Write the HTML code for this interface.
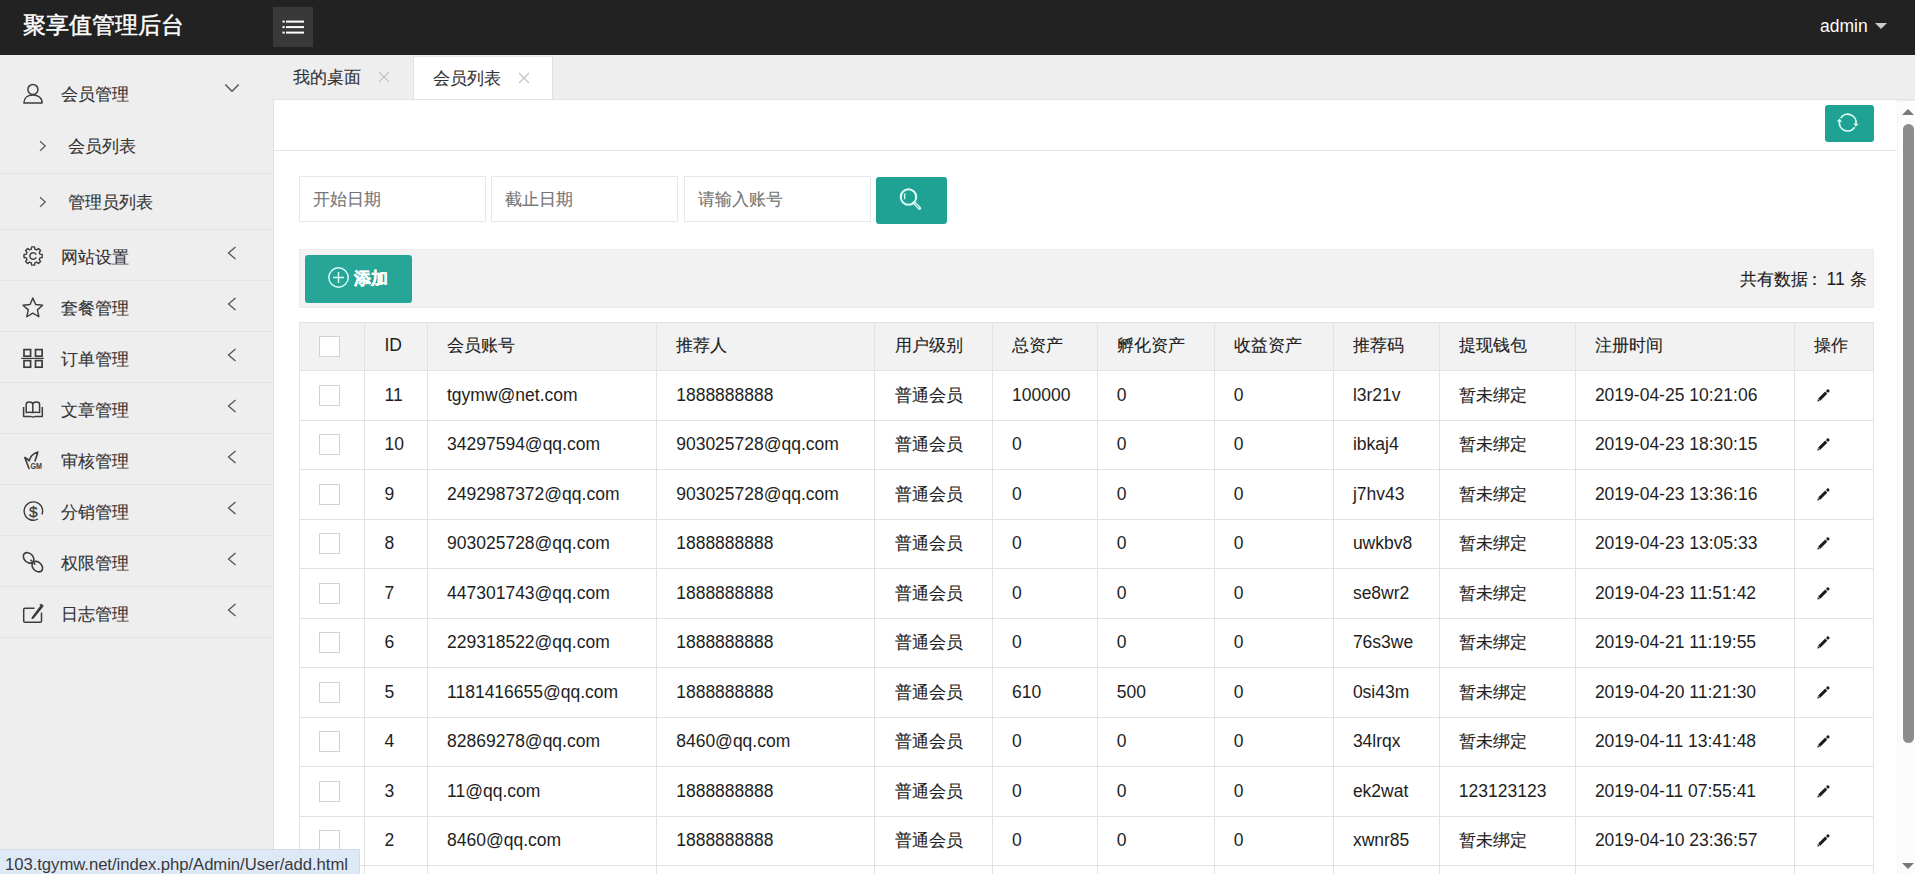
<!DOCTYPE html>
<html><head><meta charset="utf-8">
<style>
*{margin:0;padding:0;box-sizing:border-box}
html,body{width:1915px;height:874px;overflow:hidden;background:#fff;font-family:"Liberation Sans",sans-serif;color:#333;font-size:17.5px;position:relative}
#hdr{position:absolute;left:0;top:0;width:1915px;height:55px;background:#222}
#logo{position:absolute;left:23px;top:9.5px;font-size:23.2px;line-height:30px;color:#fff;white-space:nowrap}
#logo .z{-webkit-text-stroke:0.45px #fff}
#menubtn{position:absolute;left:273px;top:7px;width:40px;height:40px;background:#393939}
#menubtn svg{position:absolute;left:0;top:0}
#admin{position:absolute;left:1820px;top:14px;font-size:17.5px;line-height:24px;color:#fff}
#admin-tri{position:absolute;left:1875px;top:23px;width:0;height:0;border-left:6.5px solid transparent;border-right:6.5px solid transparent;border-top:6.5px solid #ccc}
#side{position:absolute;left:0;top:0;width:273px;height:874px}
#side:before{content:"";position:absolute;left:0;top:55px;width:273px;height:819px;background:#eee}
#side .ico{position:absolute;left:15px}
#side .t{position:absolute;line-height:25px;font-size:17.5px;color:#333;white-space:nowrap}
#side .arr{position:absolute}
#side .line{position:absolute;left:0;width:273px;height:1px;background:#e3e3e3}
#tabs{position:absolute;left:273px;top:55px;width:1642px;height:46px;background:#eee}
#tabs:after{content:"";position:absolute;left:0;top:44px;width:1642px;height:1px;background:#e2e2e2;z-index:3}
#tab1{position:absolute;left:0;top:0;width:140px;height:45px}
#tab2{position:absolute;left:140px;top:1px;width:140px;height:44px;background:#fff;border-left:1px solid #e2e2e2;border-right:1px solid #e2e2e2;border-top:1px solid #e8e8e8;z-index:2}
#tab2 .tt{top:8.5px}
#tab2 .x{top:15px}
.tt{position:absolute;top:9.5px;line-height:25px;font-size:17.5px;color:#333;white-space:nowrap}
.x{position:absolute;top:16px}
#content{position:absolute;left:273px;top:100px;width:1624px;height:774px;background:#fff;border-left:1px solid #e2e2e2}
#nav{position:absolute;left:0;top:50px;width:1623px;height:1px;background:#e5e5e5}
#refresh{position:absolute;left:1825px;top:105px;width:49px;height:37px;background:#1fa193;border-radius:3px}
.inp{position:absolute;top:176px;height:46px;border:1px solid #e8e8e8;background:#fff;font-size:17.5px;color:#757575;line-height:44px;padding-left:13px;white-space:nowrap}
#sbtn{position:absolute;left:876px;top:177px;width:71px;height:47px;background:#1fa193;border-radius:3px}
#xblock{position:absolute;left:299px;top:249px;width:1575px;height:59px;background:#f2f2f2;border:1px solid #ebebeb}
#addbtn{position:absolute;left:305px;top:255px;width:107px;height:48px;background:#27a596;border-radius:3px;color:#fff}
#addt{position:absolute;left:49px;top:11px;line-height:25px;font-size:17.5px;color:#fff;font-weight:bold}
#total{position:absolute;right:48px;top:267px;line-height:24px;font-size:17.5px;color:#333;white-space:nowrap}
#tbl{position:absolute;left:0;top:0}
.thbg{position:absolute;background:#f2f2f2}
.hl{position:absolute;height:1px;background:#e2e2e2}
.vl{position:absolute;width:1px;background:#e2e2e2}
.c{position:absolute;line-height:25px;font-size:17.5px;color:#1e1e1e;white-space:nowrap}
.cb{position:absolute;width:21px;height:21px;border:1px solid #d2d2d2;background:#fff}
.pen{position:absolute}
#sb{position:absolute;left:1897px;top:101px;width:18px;height:773px;background:#fcfcfc;border-left:1px solid #f5f5f5}
#thumb{position:absolute;left:1903px;top:124px;width:11px;height:619px;background:#8c8c8c;border-radius:5.5px}
#sbup{position:absolute;left:1902px;top:109px;width:0;height:0;border-left:6.5px solid transparent;border-right:6.5px solid transparent;border-bottom:6.5px solid #777}
#sbdn{position:absolute;left:1902px;top:863px;width:0;height:0;border-left:6.5px solid transparent;border-right:6.5px solid transparent;border-top:6.5px solid #777}
#status{position:absolute;left:0;top:849px;width:360px;height:25px;background:#dee9f8;border-top:1px solid #d0dcee;border-right:1px solid #d0dcee;font-size:16.7px;line-height:29px;padding-left:5px;color:#3a3a3a;white-space:nowrap;letter-spacing:-0.05px}

.z{font-size:0.972em;-webkit-text-stroke:0.12px currentColor}
#addt .z{-webkit-text-stroke:0.4px #fff}

</style></head><body>
<div id="hdr">
<div id="logo"><span class="z">聚享值管理后台</span></div>
<div id="menubtn"><svg width="40" height="40" viewBox="0 0 40 40"><g fill="#fff"><rect x="9.5" y="13.6" width="2.2" height="2"/><rect x="13" y="13.6" width="18" height="2"/><rect x="9.5" y="19.1" width="2.2" height="2"/><rect x="13" y="19.1" width="18" height="2"/><rect x="9.5" y="24.6" width="2.2" height="2"/><rect x="13" y="24.6" width="18" height="2"/></g></svg></div>
<div id="admin">admin</div>
<div id="admin-tri"></div>
</div>
<div id="side">
<svg class="ico" style="top:75px" width="40" height="40" viewBox="0 0 40 40"><circle cx="17.9" cy="14.4" r="5" fill="none" stroke="#3c3c3c" stroke-width="1.5"/><path d="M8.9,28 C8.9,22.8 12.8,19.9 17.9,19.9 C23,19.9 27.1,22.8 27.1,28 Z" fill="none" stroke="#3c3c3c" stroke-width="1.5" stroke-linejoin="round"/></svg>
<div class="t" style="left:61px;top:82px"><span class="z">会员管理</span></div>
<svg class="arr" style="left:224px;top:83px" width="16" height="11" viewBox="0 0 16 11"><path d="M1.3,1.5 L8,8.3 L14.7,1.5" fill="none" stroke="#555" stroke-width="1.4"/></svg>
<div class="t" style="left:68px;top:134.2px"><span class="z">会员列表</span></div>
<svg class="arr" style="left:38px;top:140.2px" width="10" height="12" viewBox="0 0 10 12"><path d="M2,1.2 L7.3,6 L2,10.8" fill="none" stroke="#555" stroke-width="1.2"/></svg>
<div class="line" style="top:173px"></div>
<div class="t" style="left:68px;top:189.8px"><span class="z">管理员列表</span></div>
<svg class="arr" style="left:38px;top:195.8px" width="10" height="12" viewBox="0 0 10 12"><path d="M2,1.2 L7.3,6 L2,10.8" fill="none" stroke="#555" stroke-width="1.2"/></svg>
<div class="line" style="top:229px"></div>
<svg class="ico" style="top:237px" width="40" height="40" viewBox="0 0 40 40"><path d="M16.66,9.91 L19.54,9.91 L19.92,12.14 L21.67,12.86 L23.51,11.56 L25.54,13.59 L24.24,15.43 L24.96,17.18 L27.19,17.56 L27.19,20.44 L24.96,20.82 L24.24,22.57 L25.54,24.41 L23.51,26.44 L21.67,25.14 L19.92,25.86 L19.54,28.09 L16.66,28.09 L16.28,25.86 L14.53,25.14 L12.69,26.44 L10.66,24.41 L11.96,22.57 L11.24,20.82 L9.01,20.44 L9.01,17.56 L11.24,17.18 L11.96,15.43 L10.66,13.59 L12.69,11.56 L14.53,12.86 L16.28,12.14Z" fill="none" stroke="#3c3c3c" stroke-width="1.4" stroke-linejoin="round"/><path d="M21.2,20.2 A3.3,3.3 0 1 1 21.2,17.8" fill="none" stroke="#3c3c3c" stroke-width="1.4"/></svg>
<div class="t" style="left:61px;top:244.5px"><span class="z">网站设置</span></div>
<svg class="arr" style="left:226px;top:246px" width="12" height="15" viewBox="0 0 12 15"><path d="M9.5,1 L2.5,7 L9.5,13" fill="none" stroke="#555" stroke-width="1.3"/></svg>
<div class="line" style="top:280px"></div>
<svg class="ico" style="top:288px" width="40" height="40" viewBox="0 0 40 40"><path d="M17.85,10.10 L20.67,16.52 L27.65,17.22 L22.42,21.88 L23.90,28.73 L17.85,25.20 L11.80,28.73 L13.28,21.88 L8.05,17.22 L15.03,16.52Z" fill="none" stroke="#3c3c3c" stroke-width="1.4" stroke-linejoin="round"/></svg>
<div class="t" style="left:61px;top:295.5px"><span class="z">套餐管理</span></div>
<svg class="arr" style="left:226px;top:297px" width="12" height="15" viewBox="0 0 12 15"><path d="M9.5,1 L2.5,7 L9.5,13" fill="none" stroke="#555" stroke-width="1.3"/></svg>
<div class="line" style="top:331px"></div>
<svg class="ico" style="top:339px" width="40" height="40" viewBox="0 0 40 40"><rect x="9" y="10.6" width="6.6" height="6.6" fill="none" stroke="#3c3c3c" stroke-width="1.7"/><rect x="20.5" y="10.6" width="6.6" height="6.6" fill="none" stroke="#3c3c3c" stroke-width="1.7"/><rect x="9" y="21.6" width="6.6" height="6.6" fill="none" stroke="#3c3c3c" stroke-width="1.7"/><rect x="20.5" y="21.6" width="6.6" height="6.6" fill="none" stroke="#3c3c3c" stroke-width="1.7"/><path d="M6.2,19.4 H28.8" stroke="#3c3c3c" stroke-width="1.2"/></svg>
<div class="t" style="left:61px;top:346.5px"><span class="z">订单管理</span></div>
<svg class="arr" style="left:226px;top:348px" width="12" height="15" viewBox="0 0 12 15"><path d="M9.5,1 L2.5,7 L9.5,13" fill="none" stroke="#555" stroke-width="1.3"/></svg>
<div class="line" style="top:382px"></div>
<svg class="ico" style="top:390px" width="40" height="40" viewBox="0 0 40 40"><path d="M8.6,17 V26.4 H15.5 L17.8,27.1 L20.1,26.4 H27.3 V17" fill="none" stroke="#3c3c3c" stroke-width="1.5" stroke-linejoin="round"/><path d="M11.2,22.6 V14.5 Q11.2,12 14,12 Q17.8,12 17.8,14.5 V22.6 Q14,21.8 11.2,22.6 Z M17.8,14.5 Q17.8,12 21.6,12 Q24.6,12 24.6,14.5 V22.6 Q21.6,21.8 17.8,22.6" fill="none" stroke="#3c3c3c" stroke-width="1.5" stroke-linejoin="round"/></svg>
<div class="t" style="left:61px;top:397.5px"><span class="z">文章管理</span></div>
<svg class="arr" style="left:226px;top:399px" width="12" height="15" viewBox="0 0 12 15"><path d="M9.5,1 L2.5,7 L9.5,13" fill="none" stroke="#555" stroke-width="1.3"/></svg>
<div class="line" style="top:433px"></div>
<svg class="ico" style="top:441px" width="40" height="40" viewBox="0 0 40 40"><path d="M9.8,16.5 L14,27.5 M9.8,16.5 Q13,18 14,20 Q16,13 22.8,11 Q21.5,16 20,20" fill="none" stroke="#3c3c3c" stroke-width="1.6" stroke-linejoin="round" stroke-linecap="round"/><text x="15.5" y="27.8" font-family="Liberation Sans" font-weight="bold" font-size="9" fill="#3c3c3c" textLength="11.5" lengthAdjust="spacingAndGlyphs">GM</text></svg>
<div class="t" style="left:61px;top:448.5px"><span class="z">审核管理</span></div>
<svg class="arr" style="left:226px;top:450px" width="12" height="15" viewBox="0 0 12 15"><path d="M9.5,1 L2.5,7 L9.5,13" fill="none" stroke="#555" stroke-width="1.3"/></svg>
<div class="line" style="top:484px"></div>
<svg class="ico" style="top:492px" width="40" height="40" viewBox="0 0 40 40"><path d="M26.9,22.5 A9.2,9.2 0 1 0 23,27" fill="none" stroke="#3c3c3c" stroke-width="1.4"/><text x="18.3" y="24.8" text-anchor="middle" font-family="Liberation Sans" font-size="15.5" fill="#3c3c3c" stroke="#3c3c3c" stroke-width="0.3">$</text></svg>
<div class="t" style="left:61px;top:499.5px"><span class="z">分销管理</span></div>
<svg class="arr" style="left:226px;top:501px" width="12" height="15" viewBox="0 0 12 15"><path d="M9.5,1 L2.5,7 L9.5,13" fill="none" stroke="#555" stroke-width="1.3"/></svg>
<div class="line" style="top:535px"></div>
<svg class="ico" style="top:543px" width="40" height="40" viewBox="0 0 40 40"><ellipse cx="13.6" cy="14.9" rx="4.4" ry="6" transform="rotate(-45 13.6 14.9)" fill="none" stroke="#3c3c3c" stroke-width="1.6"/><ellipse cx="22.3" cy="23.6" rx="4.4" ry="6" transform="rotate(-45 22.3 23.6)" fill="none" stroke="#3c3c3c" stroke-width="1.6"/><path d="M15.5,16.8 L17,18.3 M18.8,20.1 L20.3,21.6" stroke="#3c3c3c" stroke-width="1.5"/></svg>
<div class="t" style="left:61px;top:550.5px"><span class="z">权限管理</span></div>
<svg class="arr" style="left:226px;top:552px" width="12" height="15" viewBox="0 0 12 15"><path d="M9.5,1 L2.5,7 L9.5,13" fill="none" stroke="#555" stroke-width="1.3"/></svg>
<div class="line" style="top:586px"></div>
<svg class="ico" style="top:594px" width="40" height="40" viewBox="0 0 40 40"><path d="M19.5,14.3 H10 Q8.7,14.3 8.7,15.6 V26.9 Q8.7,28.2 10,28.2 H25.2 Q26.5,28.2 26.5,26.9 V18.5" fill="none" stroke="#3c3c3c" stroke-width="1.5"/><path d="M17.3,23.6 L17.2,24.3 L18.3,23.9 L26.8,13.3 L25.7,12.4 Z M24.9,11.4 L26.1,10.5 L27.8,11.9 L27,13" fill="none" stroke="#3c3c3c" stroke-width="1.5" stroke-linejoin="round"/></svg>
<div class="t" style="left:61px;top:601.5px"><span class="z">日志管理</span></div>
<svg class="arr" style="left:226px;top:603px" width="12" height="15" viewBox="0 0 12 15"><path d="M9.5,1 L2.5,7 L9.5,13" fill="none" stroke="#555" stroke-width="1.3"/></svg>
<div class="line" style="top:637px"></div>
</div>
<div id="tabs">
<div id="tab1"><span class="tt" style="left:20px"><span class="z">我的桌面</span></span><svg class="x" style="left:105px" width="12" height="12" viewBox="0 0 12 12"><path d="M1,1 L11,11 M11,1 L1,11" stroke="#c4c4c4" stroke-width="1.2"/></svg></div>
<div id="tab2"><span class="tt" style="left:19px"><span class="z">会员列表</span></span><svg class="x" style="left:104px" width="12" height="12" viewBox="0 0 12 12"><path d="M1,1 L11,11 M11,1 L1,11" stroke="#c4c4c4" stroke-width="1.2"/></svg></div>
</div>
<div id="content"><div id="nav"></div></div>
<div id="refresh"><svg width="49" height="37" viewBox="0 0 49 37"><path d="M29.66,22.30 A8.4,8.4 0 0 1 14.35,16.72" fill="none" stroke="#dcfff7" stroke-width="1.7"/><path d="M14.68,13.54 L11.76,16.45 L16.93,16.99 Z" fill="#dcfff7"/><path d="M15.74,12.90 A8.4,8.4 0 0 1 31.05,18.48" fill="none" stroke="#dcfff7" stroke-width="1.7"/><path d="M30.72,21.66 L33.64,18.75 L28.47,18.21 Z" fill="#dcfff7"/></svg></div>
<div class="inp" style="left:299px;width:187px"><span class="z">开始日期</span></div>
<div class="inp" style="left:491px;width:187px"><span class="z">截止日期</span></div>
<div class="inp" style="left:684px;width:187px"><span class="z">请输入账号</span></div>
<div id="sbtn"><svg width="71" height="47" viewBox="0 0 71 47"><circle cx="32.5" cy="20" r="7.7" fill="none" stroke="#dcfff7" stroke-width="2"/><path d="M29.3,16.3 Q27.6,19 28.9,22.3" fill="none" stroke="#dcfff7" stroke-width="1.3"/><path d="M38.2,25.8 L43.5,31.2" stroke="#dcfff7" stroke-width="3.3" stroke-linecap="round"/><path d="M39,26.6 L42.7,30.4" stroke="#1fa193" stroke-width="1" stroke-linecap="round"/></svg></div>
<div id="xblock"></div>
<div id="addbtn"><svg style="position:absolute;left:22px;top:11px" width="23" height="23" viewBox="0 0 23 23"><circle cx="11.5" cy="11.5" r="9.7" fill="none" stroke="#dcfff7" stroke-width="1.4"/><path d="M11.5,6 V17 M6,11.5 H17" stroke="#dcfff7" stroke-width="1.4"/></svg><span id="addt"><span class="z">添加</span></span></div>
<div class="c" style="left:1740px;top:266.5px"><span class="z">共有数据</span></div><div class="c" style="left:1806px;top:266.5px"><span class="z">：</span></div><div class="c" style="left:1826.5px;top:266.5px">11 <span class="z">条</span></div>
<div class="thbg" style="left:299.5px;top:322.4px;width:1574.0px;height:48.30000000000001px"></div>
<div class="hl" style="left:299.0px;top:322px;width:1575.0px"></div>
<div class="hl" style="left:299.0px;top:370px;width:1575.0px"></div>
<div class="hl" style="left:299.0px;top:420px;width:1575.0px"></div>
<div class="hl" style="left:299.0px;top:469px;width:1575.0px"></div>
<div class="hl" style="left:299.0px;top:519px;width:1575.0px"></div>
<div class="hl" style="left:299.0px;top:568px;width:1575.0px"></div>
<div class="hl" style="left:299.0px;top:618px;width:1575.0px"></div>
<div class="hl" style="left:299.0px;top:667px;width:1575.0px"></div>
<div class="hl" style="left:299.0px;top:717px;width:1575.0px"></div>
<div class="hl" style="left:299.0px;top:766px;width:1575.0px"></div>
<div class="hl" style="left:299.0px;top:816px;width:1575.0px"></div>
<div class="hl" style="left:299.0px;top:865px;width:1575.0px"></div>
<div class="vl" style="left:299px;top:322px;height:551.6px"></div>
<div class="vl" style="left:364px;top:322px;height:551.6px"></div>
<div class="vl" style="left:427px;top:322px;height:551.6px"></div>
<div class="vl" style="left:656px;top:322px;height:551.6px"></div>
<div class="vl" style="left:874px;top:322px;height:551.6px"></div>
<div class="vl" style="left:992px;top:322px;height:551.6px"></div>
<div class="vl" style="left:1097px;top:322px;height:551.6px"></div>
<div class="vl" style="left:1214px;top:322px;height:551.6px"></div>
<div class="vl" style="left:1333px;top:322px;height:551.6px"></div>
<div class="vl" style="left:1439px;top:322px;height:551.6px"></div>
<div class="vl" style="left:1575px;top:322px;height:551.6px"></div>
<div class="vl" style="left:1794px;top:322px;height:551.6px"></div>
<div class="vl" style="left:1873px;top:322px;height:551.6px"></div>
<div class="cb hd" style="left:319px;top:336px"></div>
<div class="c" style="left:384.5px;top:333.0px">ID</div>
<div class="c" style="left:447.0px;top:333.0px"><span class="z">会员账号</span></div>
<div class="c" style="left:676.2px;top:333.0px"><span class="z">推荐人</span></div>
<div class="c" style="left:894.5px;top:333.0px"><span class="z">用户级别</span></div>
<div class="c" style="left:1012.0px;top:333.0px"><span class="z">总资产</span></div>
<div class="c" style="left:1116.8px;top:333.0px"><span class="z">孵化资产</span></div>
<div class="c" style="left:1233.8px;top:333.0px"><span class="z">收益资产</span></div>
<div class="c" style="left:1352.9px;top:333.0px"><span class="z">推荐码</span></div>
<div class="c" style="left:1458.8px;top:333.0px"><span class="z">提现钱包</span></div>
<div class="c" style="left:1594.9px;top:333.0px"><span class="z">注册时间</span></div>
<div class="c" style="left:1813.5px;top:333.0px"><span class="z">操作</span></div>
<div class="cb" style="left:319px;top:384.7px"></div>
<div class="c" style="left:384.5px;top:382.7px">11</div>
<div class="c" style="left:447.0px;top:382.7px">tgymw@net.com</div>
<div class="c" style="left:676.2px;top:382.7px">1888888888</div>
<div class="c" style="left:894.5px;top:382.7px"><span class="z">普通会员</span></div>
<div class="c" style="left:1012.0px;top:382.7px">100000</div>
<div class="c" style="left:1116.8px;top:382.7px">0</div>
<div class="c" style="left:1233.8px;top:382.7px">0</div>
<div class="c" style="left:1352.9px;top:382.7px">l3r21v</div>
<div class="c" style="left:1458.8px;top:382.7px"><span class="z">暂未绑定</span></div>
<div class="c" style="left:1594.9px;top:382.7px">2019-04-25 10:21:06</div>
<svg class="pen" style="left:1814px;top:386.7px" width="18" height="17" viewBox="0 0 18 17"><path d="M5.2,12.6 L12.2,5.6" stroke="#1a1a1a" stroke-width="2.9"/><path d="M3.4,14.6 L3.9,12 L5.9,14 Z" fill="#1a1a1a"/><circle cx="13.9" cy="3.9" r="1.6" fill="#1a1a1a"/></svg>
<div class="cb" style="left:319px;top:434.2px"></div>
<div class="c" style="left:384.5px;top:432.2px">10</div>
<div class="c" style="left:447.0px;top:432.2px">34297594@qq.com</div>
<div class="c" style="left:676.2px;top:432.2px">903025728@qq.com</div>
<div class="c" style="left:894.5px;top:432.2px"><span class="z">普通会员</span></div>
<div class="c" style="left:1012.0px;top:432.2px">0</div>
<div class="c" style="left:1116.8px;top:432.2px">0</div>
<div class="c" style="left:1233.8px;top:432.2px">0</div>
<div class="c" style="left:1352.9px;top:432.2px">ibkaj4</div>
<div class="c" style="left:1458.8px;top:432.2px"><span class="z">暂未绑定</span></div>
<div class="c" style="left:1594.9px;top:432.2px">2019-04-23 18:30:15</div>
<svg class="pen" style="left:1814px;top:436.2px" width="18" height="17" viewBox="0 0 18 17"><path d="M5.2,12.6 L12.2,5.6" stroke="#1a1a1a" stroke-width="2.9"/><path d="M3.4,14.6 L3.9,12 L5.9,14 Z" fill="#1a1a1a"/><circle cx="13.9" cy="3.9" r="1.6" fill="#1a1a1a"/></svg>
<div class="cb" style="left:319px;top:483.7px"></div>
<div class="c" style="left:384.5px;top:481.7px">9</div>
<div class="c" style="left:447.0px;top:481.7px">2492987372@qq.com</div>
<div class="c" style="left:676.2px;top:481.7px">903025728@qq.com</div>
<div class="c" style="left:894.5px;top:481.7px"><span class="z">普通会员</span></div>
<div class="c" style="left:1012.0px;top:481.7px">0</div>
<div class="c" style="left:1116.8px;top:481.7px">0</div>
<div class="c" style="left:1233.8px;top:481.7px">0</div>
<div class="c" style="left:1352.9px;top:481.7px">j7hv43</div>
<div class="c" style="left:1458.8px;top:481.7px"><span class="z">暂未绑定</span></div>
<div class="c" style="left:1594.9px;top:481.7px">2019-04-23 13:36:16</div>
<svg class="pen" style="left:1814px;top:485.7px" width="18" height="17" viewBox="0 0 18 17"><path d="M5.2,12.6 L12.2,5.6" stroke="#1a1a1a" stroke-width="2.9"/><path d="M3.4,14.6 L3.9,12 L5.9,14 Z" fill="#1a1a1a"/><circle cx="13.9" cy="3.9" r="1.6" fill="#1a1a1a"/></svg>
<div class="cb" style="left:319px;top:533.1px"></div>
<div class="c" style="left:384.5px;top:531.1px">8</div>
<div class="c" style="left:447.0px;top:531.1px">903025728@qq.com</div>
<div class="c" style="left:676.2px;top:531.1px">1888888888</div>
<div class="c" style="left:894.5px;top:531.1px"><span class="z">普通会员</span></div>
<div class="c" style="left:1012.0px;top:531.1px">0</div>
<div class="c" style="left:1116.8px;top:531.1px">0</div>
<div class="c" style="left:1233.8px;top:531.1px">0</div>
<div class="c" style="left:1352.9px;top:531.1px">uwkbv8</div>
<div class="c" style="left:1458.8px;top:531.1px"><span class="z">暂未绑定</span></div>
<div class="c" style="left:1594.9px;top:531.1px">2019-04-23 13:05:33</div>
<svg class="pen" style="left:1814px;top:535.1px" width="18" height="17" viewBox="0 0 18 17"><path d="M5.2,12.6 L12.2,5.6" stroke="#1a1a1a" stroke-width="2.9"/><path d="M3.4,14.6 L3.9,12 L5.9,14 Z" fill="#1a1a1a"/><circle cx="13.9" cy="3.9" r="1.6" fill="#1a1a1a"/></svg>
<div class="cb" style="left:319px;top:582.6px"></div>
<div class="c" style="left:384.5px;top:580.6px">7</div>
<div class="c" style="left:447.0px;top:580.6px">447301743@qq.com</div>
<div class="c" style="left:676.2px;top:580.6px">1888888888</div>
<div class="c" style="left:894.5px;top:580.6px"><span class="z">普通会员</span></div>
<div class="c" style="left:1012.0px;top:580.6px">0</div>
<div class="c" style="left:1116.8px;top:580.6px">0</div>
<div class="c" style="left:1233.8px;top:580.6px">0</div>
<div class="c" style="left:1352.9px;top:580.6px">se8wr2</div>
<div class="c" style="left:1458.8px;top:580.6px"><span class="z">暂未绑定</span></div>
<div class="c" style="left:1594.9px;top:580.6px">2019-04-23 11:51:42</div>
<svg class="pen" style="left:1814px;top:584.6px" width="18" height="17" viewBox="0 0 18 17"><path d="M5.2,12.6 L12.2,5.6" stroke="#1a1a1a" stroke-width="2.9"/><path d="M3.4,14.6 L3.9,12 L5.9,14 Z" fill="#1a1a1a"/><circle cx="13.9" cy="3.9" r="1.6" fill="#1a1a1a"/></svg>
<div class="cb" style="left:319px;top:632.1px"></div>
<div class="c" style="left:384.5px;top:630.1px">6</div>
<div class="c" style="left:447.0px;top:630.1px">229318522@qq.com</div>
<div class="c" style="left:676.2px;top:630.1px">1888888888</div>
<div class="c" style="left:894.5px;top:630.1px"><span class="z">普通会员</span></div>
<div class="c" style="left:1012.0px;top:630.1px">0</div>
<div class="c" style="left:1116.8px;top:630.1px">0</div>
<div class="c" style="left:1233.8px;top:630.1px">0</div>
<div class="c" style="left:1352.9px;top:630.1px">76s3we</div>
<div class="c" style="left:1458.8px;top:630.1px"><span class="z">暂未绑定</span></div>
<div class="c" style="left:1594.9px;top:630.1px">2019-04-21 11:19:55</div>
<svg class="pen" style="left:1814px;top:634.1px" width="18" height="17" viewBox="0 0 18 17"><path d="M5.2,12.6 L12.2,5.6" stroke="#1a1a1a" stroke-width="2.9"/><path d="M3.4,14.6 L3.9,12 L5.9,14 Z" fill="#1a1a1a"/><circle cx="13.9" cy="3.9" r="1.6" fill="#1a1a1a"/></svg>
<div class="cb" style="left:319px;top:681.6px"></div>
<div class="c" style="left:384.5px;top:679.6px">5</div>
<div class="c" style="left:447.0px;top:679.6px">1181416655@qq.com</div>
<div class="c" style="left:676.2px;top:679.6px">1888888888</div>
<div class="c" style="left:894.5px;top:679.6px"><span class="z">普通会员</span></div>
<div class="c" style="left:1012.0px;top:679.6px">610</div>
<div class="c" style="left:1116.8px;top:679.6px">500</div>
<div class="c" style="left:1233.8px;top:679.6px">0</div>
<div class="c" style="left:1352.9px;top:679.6px">0si43m</div>
<div class="c" style="left:1458.8px;top:679.6px"><span class="z">暂未绑定</span></div>
<div class="c" style="left:1594.9px;top:679.6px">2019-04-20 11:21:30</div>
<svg class="pen" style="left:1814px;top:683.6px" width="18" height="17" viewBox="0 0 18 17"><path d="M5.2,12.6 L12.2,5.6" stroke="#1a1a1a" stroke-width="2.9"/><path d="M3.4,14.6 L3.9,12 L5.9,14 Z" fill="#1a1a1a"/><circle cx="13.9" cy="3.9" r="1.6" fill="#1a1a1a"/></svg>
<div class="cb" style="left:319px;top:731.1px"></div>
<div class="c" style="left:384.5px;top:729.1px">4</div>
<div class="c" style="left:447.0px;top:729.1px">82869278@qq.com</div>
<div class="c" style="left:676.2px;top:729.1px">8460@qq.com</div>
<div class="c" style="left:894.5px;top:729.1px"><span class="z">普通会员</span></div>
<div class="c" style="left:1012.0px;top:729.1px">0</div>
<div class="c" style="left:1116.8px;top:729.1px">0</div>
<div class="c" style="left:1233.8px;top:729.1px">0</div>
<div class="c" style="left:1352.9px;top:729.1px">34lrqx</div>
<div class="c" style="left:1458.8px;top:729.1px"><span class="z">暂未绑定</span></div>
<div class="c" style="left:1594.9px;top:729.1px">2019-04-11 13:41:48</div>
<svg class="pen" style="left:1814px;top:733.1px" width="18" height="17" viewBox="0 0 18 17"><path d="M5.2,12.6 L12.2,5.6" stroke="#1a1a1a" stroke-width="2.9"/><path d="M3.4,14.6 L3.9,12 L5.9,14 Z" fill="#1a1a1a"/><circle cx="13.9" cy="3.9" r="1.6" fill="#1a1a1a"/></svg>
<div class="cb" style="left:319px;top:780.5px"></div>
<div class="c" style="left:384.5px;top:778.5px">3</div>
<div class="c" style="left:447.0px;top:778.5px">11@qq.com</div>
<div class="c" style="left:676.2px;top:778.5px">1888888888</div>
<div class="c" style="left:894.5px;top:778.5px"><span class="z">普通会员</span></div>
<div class="c" style="left:1012.0px;top:778.5px">0</div>
<div class="c" style="left:1116.8px;top:778.5px">0</div>
<div class="c" style="left:1233.8px;top:778.5px">0</div>
<div class="c" style="left:1352.9px;top:778.5px">ek2wat</div>
<div class="c" style="left:1458.8px;top:778.5px">123123123</div>
<div class="c" style="left:1594.9px;top:778.5px">2019-04-11 07:55:41</div>
<svg class="pen" style="left:1814px;top:782.5px" width="18" height="17" viewBox="0 0 18 17"><path d="M5.2,12.6 L12.2,5.6" stroke="#1a1a1a" stroke-width="2.9"/><path d="M3.4,14.6 L3.9,12 L5.9,14 Z" fill="#1a1a1a"/><circle cx="13.9" cy="3.9" r="1.6" fill="#1a1a1a"/></svg>
<div class="cb" style="left:319px;top:830.0px"></div>
<div class="c" style="left:384.5px;top:828.0px">2</div>
<div class="c" style="left:447.0px;top:828.0px">8460@qq.com</div>
<div class="c" style="left:676.2px;top:828.0px">1888888888</div>
<div class="c" style="left:894.5px;top:828.0px"><span class="z">普通会员</span></div>
<div class="c" style="left:1012.0px;top:828.0px">0</div>
<div class="c" style="left:1116.8px;top:828.0px">0</div>
<div class="c" style="left:1233.8px;top:828.0px">0</div>
<div class="c" style="left:1352.9px;top:828.0px">xwnr85</div>
<div class="c" style="left:1458.8px;top:828.0px"><span class="z">暂未绑定</span></div>
<div class="c" style="left:1594.9px;top:828.0px">2019-04-10 23:36:57</div>
<svg class="pen" style="left:1814px;top:832.0px" width="18" height="17" viewBox="0 0 18 17"><path d="M5.2,12.6 L12.2,5.6" stroke="#1a1a1a" stroke-width="2.9"/><path d="M3.4,14.6 L3.9,12 L5.9,14 Z" fill="#1a1a1a"/><circle cx="13.9" cy="3.9" r="1.6" fill="#1a1a1a"/></svg>
<div class="cb" style="left:319px;top:879.5px"></div>
<div id="sb"></div><div id="thumb"></div><div id="sbup"></div><div id="sbdn"></div>
<div id="status">103.tgymw.net/index.php/Admin/User/add.html</div>
</body></html>
